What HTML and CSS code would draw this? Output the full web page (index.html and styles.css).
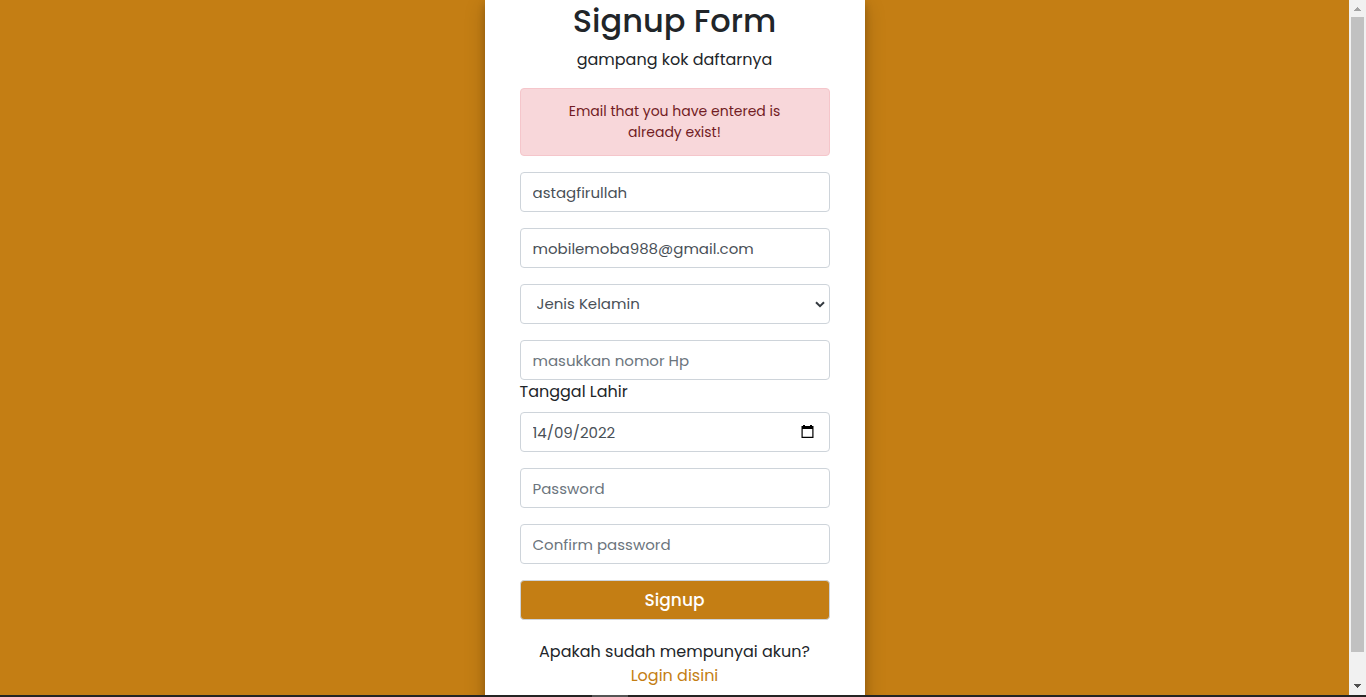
FILE: index.html
```html
<!DOCTYPE html>
<html lang="id">
<head>
<meta charset="utf-8">
<meta name="viewport" content="width=device-width, initial-scale=1">
<title>Signup Form</title>
<link rel="stylesheet" href="styles.css">
</head>
<body>
<div class="window">
  <main class="page">
    <form class="card" autocomplete="off">
      <h2 class="title">Signup Form</h2>
      <p class="subtitle">gampang kok daftarnya</p>
      <div class="alert" role="alert">Email that you have entered is already exist!</div>
      <div class="group"><input class="control" type="text" aria-label="Nama" value="astagfirullah" spellcheck="false"></div>
      <div class="group"><input class="control" type="email" aria-label="Email" value="mobilemoba988@gmail.com"></div>
      <div class="group select-wrap">
        <select class="control select" aria-label="Jenis Kelamin">
          <option>Jenis Kelamin</option>
          <option>Laki-laki</option>
          <option>Perempuan</option>
        </select>
        <svg class="chevron" viewBox="0 0 10 7" aria-hidden="true"><path d="M1 1.3 5 5.2 9 1.3" fill="none" stroke="currentColor" stroke-width="2"/></svg>
      </div>
      <input class="control" type="tel" aria-label="Nomor Hp" placeholder="masukkan nomor Hp">
      <label class="label" for="birth">Tanggal Lahir</label>
      <div class="group date-wrap">
        <input class="control date" id="birth" type="text" value="14/09/2022">
        <button class="calendar" type="button" aria-label="Pilih tanggal">
          <svg viewBox="0 0 13 13" aria-hidden="true"><path d="M2 0h2v1h5V0h2v1h1.500v12H.5V1H2zM1.700 4v7.800h9.600V4z" fill="currentColor" fill-rule="evenodd"/></svg>
        </button>
      </div>
      <div class="group"><input class="control" type="password" aria-label="Password" placeholder="Password"></div>
      <div class="group"><input class="control" type="password" aria-label="Confirm password" placeholder="Confirm password"></div>
      <button class="control submit" type="submit">Signup</button>
      <p class="login">Apakah sudah mempunyai akun?<br><a href="#login">Login disini</a></p>
    </form>
  </main>
  <div class="scrollbar" aria-hidden="true">
    <svg class="arrow arrow-up" viewBox="0 0 17 17"><path d="M5 11h7v-1h-1V9h-1V8H9V7H8v1H7v1H6v1H5z" fill="currentColor"/></svg>
    <div class="track"><div class="thumb"></div></div>
    <svg class="arrow" viewBox="0 0 17 17"><path d="M5 6h7v1h-1v1h-1v1H9v1H8V9H7V8H6V7H5z" fill="currentColor"/></svg>
  </div>
</div>
<div class="taskbar" aria-hidden="true"><div class="task-active"></div></div>
</body>
</html>
```
FILE: styles.css
```css
* { box-sizing: border-box; }

body {
  margin: 0;
  height: 100vh;
  display: flex;
  flex-direction: column;
  overflow: hidden;
  font: 400 16px/24px Poppins, Inter, sans-serif;
  color: #212529;
}

.window {
  flex: 1;
  min-height: 0;
  display: flex;
}

.page {
  flex: 1;
  display: flex;
  justify-content: center;
  overflow: hidden;
  background: #c47e14;
}

.card {
  width: 100%;
  max-width: 380px;
  height: max-content;
  min-height: 100%;
  padding: 0 35px 30px;
  background: #fff;
  box-shadow: 0 4px 8px 0 rgba(0, 0, 0, 0.2), 0 6px 20px 0 rgba(0, 0, 0, 0.19);
}

.title {
  margin: 0 0 6px;
  font-size: 32px;
  font-weight: 500;
  line-height: 42px;
  text-align: center;
}

.subtitle {
  margin: 0 0 16px;
  text-align: center;
}

.alert {
  margin-bottom: 16px;
  padding: 12px 40px;
  border: 1px solid #f5c6cb;
  border-radius: 4px;
  background: #f8d7da;
  color: #721c24;
  font-size: 14px;
  line-height: 21px;
  text-align: center;
}

.group { margin-bottom: 16px; }

.control {
  display: block;
  width: 100%;
  height: 40px;
  padding: 6px 12px;
  border: 1px solid #ced4da;
  border-radius: 4px;
  background: #fff;
  color: #495057;
  font: inherit;
  font-size: 15px;
}

.control::placeholder {
  color: #6c757d;
  opacity: 1;
}

.select-wrap,
.date-wrap { position: relative; }

.select {
  appearance: none;
  padding-left: 16px;
}

.chevron {
  position: absolute;
  top: 17px;
  right: 5px;
  width: 10px;
  height: 7px;
  color: #343a40;
  pointer-events: none;
}

.label {
  display: block;
  margin-bottom: 8px;
}

.date { padding-right: 40px; }

.calendar {
  position: absolute;
  top: 13px;
  right: 16px;
  width: 13px;
  height: 13px;
  padding: 0;
  border: 0;
  background: none;
  color: #000;
}

.calendar svg { display: block; }

.submit {
  margin-bottom: 20px;
  background: #c47e14;
  color: #fff;
  font-size: 17px;
  font-weight: 500;
  cursor: pointer;
}

.login {
  margin: 0;
  text-align: center;
}

.login a {
  color: #c47e14;
  text-decoration: none;
}

.scrollbar {
  width: 17px;
  display: flex;
  flex-direction: column;
  background: #f1f1f1;
}

.arrow {
  width: 17px;
  height: 17px;
  color: #505050;
}

.arrow-up { color: #a3a3a3; }

.track {
  flex: 1;
  padding: 0 2px;
}

.thumb {
  height: 96%;
  background: #c1c1c1;
}

.taskbar {
  height: 2px;
  background: #252423;
}

.task-active {
  width: 36px;
  height: 2px;
  margin-left: 592px;
  background: #555;
}
```
